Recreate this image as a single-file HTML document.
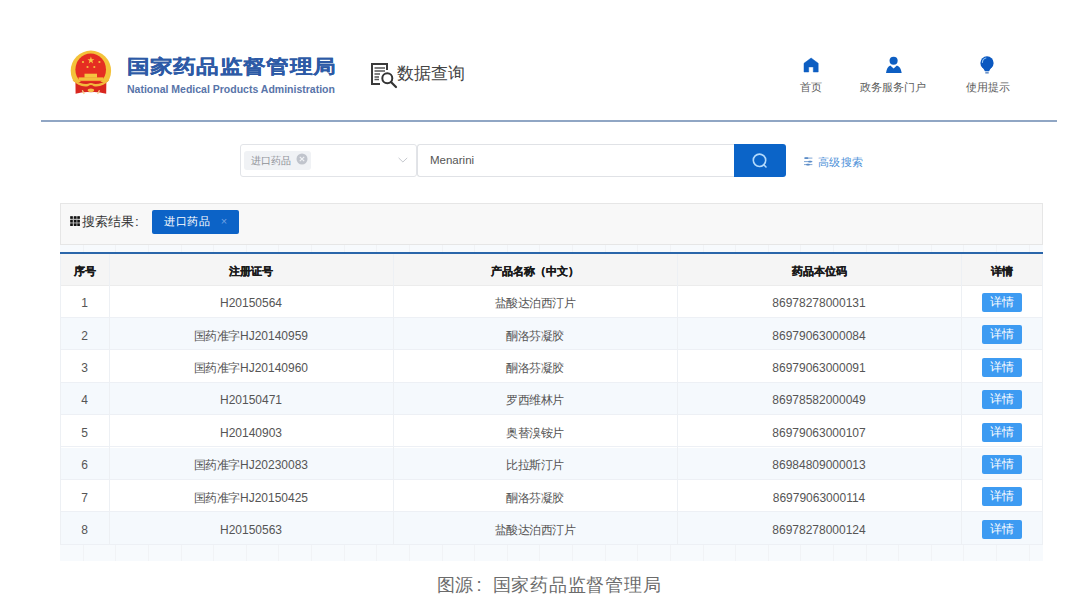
<!DOCTYPE html>
<html><head><meta charset="utf-8">
<style>
*{margin:0;padding:0;box-sizing:border-box}
html,body{width:1069px;height:610px;overflow:hidden;background:#fff;font-family:"Liberation Sans",sans-serif;color:#333}
.a{position:absolute;white-space:nowrap}
#title{left:126.5px;top:55.3px;letter-spacing:0.3px;font-size:23.1px;font-weight:bold;color:#2d5aa6;line-height:28px;transform:scaleY(0.84);transform-origin:0 0;-webkit-text-stroke:0.2px #2d5aa6}
#en{left:127px;top:83px;font-size:10.5px;font-weight:bold;color:#5874a9;line-height:12px}
#dq{left:397px;top:62px;font-size:17.3px;color:#444;line-height:22px}
.nav{font-size:10.8px;color:#5c5c5c;line-height:13px;text-align:center;width:100px}
#hline{left:41px;top:120px;width:1016px;height:2px;background:#90a6c4}
#sel{left:239.5px;top:144px;width:177.5px;height:33px;border:1px solid #e2e4e8;border-radius:3px;background:#fff}
#tag{left:244px;top:151px;width:67px;height:19px;background:#f0f2f5;border-radius:3px}
#tagt{left:251px;top:154px;font-size:9.7px;color:#8e9197;line-height:14px}
#inp{left:417px;top:144px;width:318px;height:33px;border:1px solid #e0e2e6;border-right:none;border-radius:3px 0 0 3px;background:#fff}
#inpt{left:430px;top:153px;font-size:11.5px;color:#555;line-height:14px}
#btn{left:734px;top:144px;width:52.3px;height:32.5px;background:#0b64c8;border-radius:0 3px 3px 0}
#adv{left:818px;top:154.8px;font-size:11.4px;letter-spacing:0.4px;color:#4a8fd8;line-height:14px}
#bar{left:60px;top:203px;width:983px;height:41.5px;background:#f8f8f8;border:1px solid #e6e6e6}
#bart{left:81.5px;top:214px;font-size:13.4px;color:#333;line-height:16px}
#btag{left:152px;top:210px;width:87px;height:24px;background:#0c63c7;border-radius:2px}
#btagt{left:164px;top:214px;font-size:11.4px;letter-spacing:0.5px;color:#fff;line-height:14px}
#tbl{left:60px;top:253px;width:983px;height:292px}
#thead{left:60px;top:252px;width:983px;height:34px;background:#f5f5f5;border-top:2px solid #2a66aa;border-bottom:1px solid #ececec}
.th{font-size:11px;font-weight:bold;color:#1a1a1a;-webkit-text-stroke:0.25px #1a1a1a;line-height:14px;text-align:center}
.td{font-size:12px;color:#555;line-height:14px;text-align:center}
.c{font-size:12px;letter-spacing:-0.5px}
.gs{left:60px;width:983px;background:#f7fafd;overflow:hidden}
.gl{position:absolute;top:0;width:1px;height:100%;background:#f1f3f6}
.row{position:absolute;left:60px;width:983px;height:32.4px;border-bottom:1px solid #edf0f5}
.row.odd{background:#fff}
.row.even{background:#f5f9fd}
.vl{position:absolute;top:254px;width:1px;height:290.5px;background:#edf0f4}
.dbtn{position:absolute;left:982px;width:40px;height:19px;background:#3d9bf2;border-radius:2px;color:#fff;font-size:12px;line-height:19px;text-align:center}
#cap{left:436.5px;top:573.5px;font-size:18.4px;letter-spacing:0.8px;color:#6b6b6b;line-height:22px}
</style></head><body>

<!-- emblem -->
<svg class="a" style="left:66px;top:46px" width="50" height="52" viewBox="66 46 50 52">
  <defs><clipPath id="ct"><rect x="60" y="40" width="60" height="42"/></clipPath></defs>
  <path d="M75.4 79 L106.4 79 L106.2 93.8 Q98 91.5 90.9 92.2 Q83 91.5 75.6 93.8 Z" fill="#d8261f"/>
  <g clip-path="url(#ct)">
  <ellipse cx="90.9" cy="70.8" rx="20.2" ry="20.2" fill="#f3c23a"/>
  <ellipse cx="90.7" cy="69.6" rx="15.3" ry="16" fill="#e52d22"/>
  </g>
  <path d="M72.5 80 Q79 87.5 88 86.2 Q90.9 84 93.8 86.2 Q102.8 87.5 109.3 80 L106.5 80 Q101 84.5 93.8 83.8 Q90.9 82 88 83.8 Q80.8 84.5 75.3 80 Z" fill="#f3b93c"/>
  <rect x="84.5" y="73.7" width="12.5" height="4" fill="#f5c440"/>
  <rect x="78.6" y="77.4" width="24.8" height="3.4" fill="#f3be3c"/>
  <ellipse cx="90.9" cy="90.2" rx="3.2" ry="1.8" fill="#f5c046"/>
  <path d="M82.3 90.3 L84.2 94 M99.5 90.3 L97.6 94" stroke="#f6cf8a" stroke-width="1.3"/>
  <polygon points="90.9,56.6 91.8,59.2 94.4,59.2 92.3,60.8 93.1,63.4 90.9,61.8 88.7,63.4 89.5,60.8 87.4,59.2 90,59.2" fill="#f7c844"/>
  <circle cx="83" cy="62" r="1.1" fill="#f5c040"/><circle cx="99.4" cy="62" r="1.1" fill="#f5c040"/>
  <circle cx="87.5" cy="67" r="1.1" fill="#f5c040"/><circle cx="94.3" cy="67" r="1.1" fill="#f5c040"/>
</svg>
<div class="a" id="title">国家药品监督管理局</div>
<div class="a" id="en">National Medical Products Administration</div>

<!-- data query icon -->
<svg class="a" style="left:370px;top:62px" width="30" height="28" viewBox="0 0 30 28">
  <path d="M10 22 H2 V2 H17 V8" fill="none" stroke="#3a3a3a" stroke-width="2"/>
  <path d="M4.5 6 H15 M4.5 9 H15 M4.5 12 H10 M4.5 15 H9 M4.5 17.5 H9" stroke="#555" stroke-width="1.3"/>
  <circle cx="17.3" cy="16.3" r="5" fill="none" stroke="#333" stroke-width="2"/>
  <path d="M21 20 L26 25" stroke="#333" stroke-width="2.2" stroke-linecap="round"/>
</svg>
<div class="a" id="dq">数据查询</div>

<!-- nav -->
<svg class="a" style="left:796px;top:50px" width="30" height="30" viewBox="796 50 30 30">
  <path d="M811.1 58 L818.2 63.3 V72 H813.3 V66.9 H808.7 V72 H804 V63.3 Z" fill="#0d5ec2" stroke="#0d5ec2" stroke-width="0.5" stroke-linejoin="round"/>
</svg>
<div class="a nav" style="left:761px;top:81px">首页</div>
<svg class="a" style="left:880px;top:50px" width="30" height="30" viewBox="880 50 30 30">
  <circle cx="893.6" cy="60.8" r="4.05" fill="#0d5ec2"/>
  <path d="M886 72.9 Q886.8 66.8 890.3 65.4 L893.6 68.4 L896.9 65.4 Q900.9 66.8 901.7 72.9 Z" fill="#0d5ec2"/>
</svg>
<div class="a nav" style="left:843.2px;top:81px">政务服务门户</div>
<svg class="a" style="left:974px;top:50px" width="30" height="30" viewBox="974 50 30 30">
  <circle cx="987" cy="62.9" r="6.6" fill="#0b58c0"/>
  <path d="M981.6 66.6 Q983.5 68.5 984.9 71.3 H989.1 Q990.5 68.5 992.4 66.6 Z" fill="#0b58c0"/>
  <rect x="985.3" y="71.9" width="3.4" height="1.7" fill="#6d93c8"/>
  <path d="M982.4 62.4 Q982.6 58.8 985.9 58" fill="none" stroke="#8ec2f4" stroke-width="1.1" stroke-linecap="round"/>
</svg>
<div class="a nav" style="left:937.7px;top:81px">使用提示</div>

<div class="a" id="hline"></div>

<!-- search -->
<div class="a" id="sel"></div>
<div class="a" id="tag"></div>
<div class="a" id="tagt">进口药品</div>
<svg class="a" style="left:296px;top:153px" width="12" height="12" viewBox="0 0 12 12">
  <circle cx="6" cy="6" r="5.5" fill="#c0c4cc"/>
  <path d="M3.8 3.8 L8.2 8.2 M8.2 3.8 L3.8 8.2" stroke="#f0f2f5" stroke-width="1.2"/>
</svg>
<svg class="a" style="left:396px;top:154px" width="14" height="12" viewBox="396 154 14 12">
  <path d="M398.6 157.9 L402.9 162 L407.2 157.9" fill="none" stroke="#c6c9cf" stroke-width="1"/>
</svg>
<div class="a" id="inp"></div>
<div class="a" id="inpt">Menarini</div>
<div class="a" id="btn"></div>
<svg class="a" style="left:750px;top:151px" width="20" height="20" viewBox="0 0 20 20">
  <circle cx="9.5" cy="9.3" r="6.2" fill="none" stroke="#b3dafc" stroke-width="1.6"/>
  <path d="M13.8 13.8 L16 16" stroke="#b3dafc" stroke-width="1.6" stroke-linecap="round"/>
</svg>
<svg class="a" style="left:800px;top:154px" width="16" height="14" viewBox="800 154 16 14">
  <path d="M804 158.1 H812.4 M804 161.6 H812.4 M804 164.6 H812.4" stroke="#7ea6d6" stroke-width="1"/>
  <path d="M805.5 158.1 H807.5 M809 161.6 H811 M807 164.6 H809" stroke="#5b8bc6" stroke-width="1.7" stroke-linecap="round"/>
</svg>
<div class="a" id="adv">高级搜索</div>

<!-- results bar -->
<div class="a" id="bar"></div>
<svg class="a" style="left:68px;top:214px" width="14" height="14" viewBox="68 214 14 14">
  <rect x="70.5" y="216.5" width="9" height="9" fill="#c4c4c4"/><rect x="70.2" y="216.2" width="2.6" height="2.6" fill="#111"/><rect x="70.2" y="219.9" width="2.6" height="2.6" fill="#111"/><rect x="70.2" y="223.4" width="2.6" height="2.6" fill="#111"/><rect x="73.9" y="216.2" width="2.6" height="2.6" fill="#111"/><rect x="73.9" y="219.9" width="2.6" height="2.6" fill="#111"/><rect x="73.9" y="223.4" width="2.6" height="2.6" fill="#111"/><rect x="77.3" y="216.2" width="2.6" height="2.6" fill="#111"/><rect x="77.3" y="219.9" width="2.6" height="2.6" fill="#111"/><rect x="77.3" y="223.4" width="2.6" height="2.6" fill="#111"/>
</svg>
<div class="a" id="bart">搜索结果<span style="padding-left:1.5px">:</span></div>
<div class="a" id="btag"></div>
<div class="a" id="btagt">进口药品</div>
<div class="a" style="left:220.8px;top:214px;font-size:11px;color:#6fa2e4;line-height:14px">×</div>

<!-- table -->
<div class="a" id="thead"></div>
<div class="row odd" style="top:285.50px"></div>
<div class="row even" style="top:317.90px"></div>
<div class="row odd" style="top:350.30px"></div>
<div class="row even" style="top:382.70px"></div>
<div class="row odd" style="top:415.10px"></div>
<div class="row even" style="top:447.50px"></div>
<div class="row odd" style="top:479.90px"></div>
<div class="row even" style="top:512.30px"></div>
<div class="vl" style="left:60px"></div>
<div class="vl" style="left:109px"></div>
<div class="vl" style="left:393px"></div>
<div class="vl" style="left:677px"></div>
<div class="vl" style="left:961px"></div>
<div class="vl" style="left:1042px"></div>
<div class="a td" style="left:60px;width:49px;top:296.20px">1</div>
<div class="a td" style="left:109px;width:284px;top:296.20px">H20150564</div>
<div class="a td" style="left:393px;width:284px;top:296.20px"><span class="c">盐酸达泊西汀片</span></div>
<div class="a td" style="left:677px;width:284px;top:296.20px">86978278000131</div>
<div class="dbtn" style="top:292.90px">详情</div>
<div class="a td" style="left:60px;width:49px;top:328.60px">2</div>
<div class="a td" style="left:109px;width:284px;top:328.60px"><span class="c">国药准字</span>HJ20140959</div>
<div class="a td" style="left:393px;width:284px;top:328.60px"><span class="c">酮洛芬凝胶</span></div>
<div class="a td" style="left:677px;width:284px;top:328.60px">86979063000084</div>
<div class="dbtn" style="top:325.30px">详情</div>
<div class="a td" style="left:60px;width:49px;top:361.00px">3</div>
<div class="a td" style="left:109px;width:284px;top:361.00px"><span class="c">国药准字</span>HJ20140960</div>
<div class="a td" style="left:393px;width:284px;top:361.00px"><span class="c">酮洛芬凝胶</span></div>
<div class="a td" style="left:677px;width:284px;top:361.00px">86979063000091</div>
<div class="dbtn" style="top:357.70px">详情</div>
<div class="a td" style="left:60px;width:49px;top:393.40px">4</div>
<div class="a td" style="left:109px;width:284px;top:393.40px">H20150471</div>
<div class="a td" style="left:393px;width:284px;top:393.40px"><span class="c">罗西维林片</span></div>
<div class="a td" style="left:677px;width:284px;top:393.40px">86978582000049</div>
<div class="dbtn" style="top:390.10px">详情</div>
<div class="a td" style="left:60px;width:49px;top:425.80px">5</div>
<div class="a td" style="left:109px;width:284px;top:425.80px">H20140903</div>
<div class="a td" style="left:393px;width:284px;top:425.80px"><span class="c">奥替溴铵片</span></div>
<div class="a td" style="left:677px;width:284px;top:425.80px">86979063000107</div>
<div class="dbtn" style="top:422.50px">详情</div>
<div class="a td" style="left:60px;width:49px;top:458.20px">6</div>
<div class="a td" style="left:109px;width:284px;top:458.20px"><span class="c">国药准字</span>HJ20230083</div>
<div class="a td" style="left:393px;width:284px;top:458.20px"><span class="c">比拉斯汀片</span></div>
<div class="a td" style="left:677px;width:284px;top:458.20px">86984809000013</div>
<div class="dbtn" style="top:454.90px">详情</div>
<div class="a td" style="left:60px;width:49px;top:490.60px">7</div>
<div class="a td" style="left:109px;width:284px;top:490.60px"><span class="c">国药准字</span>HJ20150425</div>
<div class="a td" style="left:393px;width:284px;top:490.60px"><span class="c">酮洛芬凝胶</span></div>
<div class="a td" style="left:677px;width:284px;top:490.60px">86979063000114</div>
<div class="dbtn" style="top:487.30px">详情</div>
<div class="a td" style="left:60px;width:49px;top:523.00px">8</div>
<div class="a td" style="left:109px;width:284px;top:523.00px">H20150563</div>
<div class="a td" style="left:393px;width:284px;top:523.00px"><span class="c">盐酸达泊西汀片</span></div>
<div class="a td" style="left:677px;width:284px;top:523.00px">86978278000124</div>
<div class="dbtn" style="top:519.70px">详情</div>
<div class="a gs" style="top:244.5px;height:7.5px"><div class="gl" style="left:22.7px"></div><div class="gl" style="left:55.3px"></div><div class="gl" style="left:87.9px"></div><div class="gl" style="left:120.6px"></div><div class="gl" style="left:153.2px"></div><div class="gl" style="left:185.8px"></div><div class="gl" style="left:218.4px"></div><div class="gl" style="left:251.0px"></div><div class="gl" style="left:283.7px"></div><div class="gl" style="left:316.3px"></div><div class="gl" style="left:348.9px"></div><div class="gl" style="left:381.5px"></div><div class="gl" style="left:414.1px"></div><div class="gl" style="left:446.8px"></div><div class="gl" style="left:479.4px"></div><div class="gl" style="left:512.0px"></div><div class="gl" style="left:544.6px"></div><div class="gl" style="left:577.2px"></div><div class="gl" style="left:609.9px"></div><div class="gl" style="left:642.5px"></div><div class="gl" style="left:675.1px"></div><div class="gl" style="left:707.7px"></div><div class="gl" style="left:740.3px"></div><div class="gl" style="left:773.0px"></div><div class="gl" style="left:805.6px"></div><div class="gl" style="left:838.2px"></div><div class="gl" style="left:870.8px"></div><div class="gl" style="left:903.4px"></div><div class="gl" style="left:936.1px"></div><div class="gl" style="left:968.7px"></div></div>
<div class="a gs" style="top:545px;height:16px"><div class="gl" style="left:22.7px"></div><div class="gl" style="left:55.3px"></div><div class="gl" style="left:87.9px"></div><div class="gl" style="left:120.6px"></div><div class="gl" style="left:153.2px"></div><div class="gl" style="left:185.8px"></div><div class="gl" style="left:218.4px"></div><div class="gl" style="left:251.0px"></div><div class="gl" style="left:283.7px"></div><div class="gl" style="left:316.3px"></div><div class="gl" style="left:348.9px"></div><div class="gl" style="left:381.5px"></div><div class="gl" style="left:414.1px"></div><div class="gl" style="left:446.8px"></div><div class="gl" style="left:479.4px"></div><div class="gl" style="left:512.0px"></div><div class="gl" style="left:544.6px"></div><div class="gl" style="left:577.2px"></div><div class="gl" style="left:609.9px"></div><div class="gl" style="left:642.5px"></div><div class="gl" style="left:675.1px"></div><div class="gl" style="left:707.7px"></div><div class="gl" style="left:740.3px"></div><div class="gl" style="left:773.0px"></div><div class="gl" style="left:805.6px"></div><div class="gl" style="left:838.2px"></div><div class="gl" style="left:870.8px"></div><div class="gl" style="left:903.4px"></div><div class="gl" style="left:936.1px"></div><div class="gl" style="left:968.7px"></div></div>
<div class="a th" style="left:60px;width:49px;top:264.3px">序号</div>
<div class="a th" style="left:109px;width:284px;top:264.3px">注册证号</div>
<div class="a th" style="left:393px;width:284px;top:264.3px">产品名称（中文）</div>
<div class="a th" style="left:677px;width:284px;top:264.3px">药品本位码</div>
<div class="a th" style="left:961px;width:82px;top:264.3px">详情</div>

<div class="a" id="cap">图源<span style="display:inline-block;width:18.4px;padding-left:2.5px">:</span>国家药品监督管理局</div>
</body></html>
